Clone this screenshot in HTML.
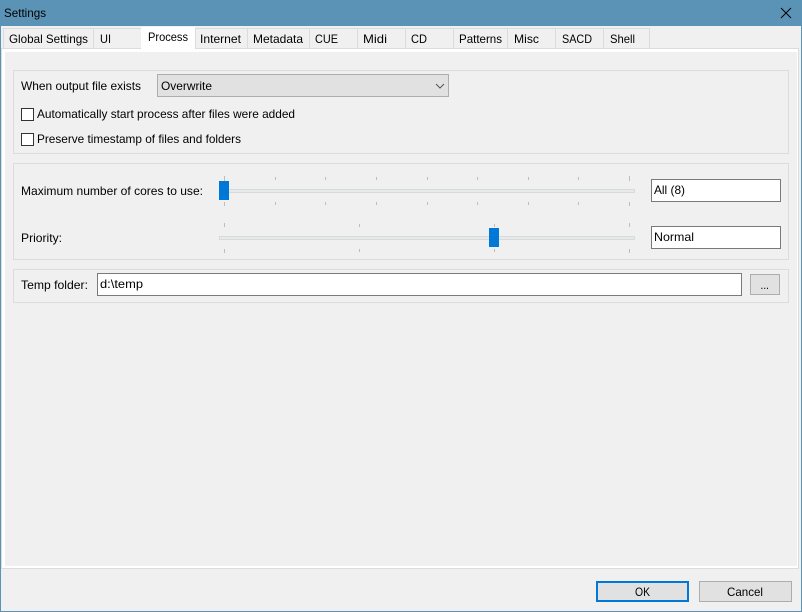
<!DOCTYPE html>
<html>
<head>
<meta charset="utf-8">
<title>Settings</title>
<style>
html,body{margin:0;padding:0;background:#f0f0f0;width:802px;height:612px;overflow:hidden}
svg{display:block}
text{font-family:"Liberation Sans",sans-serif;font-size:12px;fill:#000}
.r{shape-rendering:crispEdges}
</style>
</head>
<body>
<svg width="802" height="612" viewBox="0 0 802 612" xmlns="http://www.w3.org/2000/svg">
<g class="r">
<rect width="802" height="612" fill="#5a93b5"/>
<rect x="1" y="26" width="800" height="585" fill="#f0f0f0"/>
<!-- tabs -->
<g fill="#f0f0f0" stroke="#dcdcdc">
<rect x="3.5" y="28.5" width="90" height="20"/>
<rect x="93.5" y="28.5" width="48" height="20"/>
<rect x="195.5" y="28.5" width="52" height="20"/>
<rect x="247.5" y="28.5" width="62" height="20"/>
<rect x="309.500" y="28.5" width="48" height="20"/>
<rect x="357.5" y="28.5" width="48" height="20"/>
<rect x="405.5" y="28.5" width="48" height="20"/>
<rect x="453.5" y="28.5" width="54" height="20"/>
<rect x="507.5" y="28.5" width="48" height="20"/>
<rect x="555.5" y="28.5" width="48" height="20"/>
<rect x="603.5" y="28.5" width="46" height="20"/>
</g>
<!-- pane -->
<rect x="1" y="48" width="798" height="521" fill="#dcdcdc"/>
<rect x="2" y="49" width="796" height="519" fill="#fff"/>
<rect x="5" y="52" width="792" height="514" fill="#f0f0f0"/>
<!-- selected tab -->
<rect x="141" y="27" width="54" height="25" fill="#fff"/>
<!-- groups -->
<g fill="none" stroke="#dcdcdc">
<rect x="13.5" y="70.5" width="775" height="83"/>
<rect x="13.5" y="163.5" width="775" height="96"/>
<rect x="13.5" y="269.5" width="775" height="33"/>
</g>
<!-- combo -->
<rect x="157.5" y="74.5" width="291" height="22" fill="#e1e1e1" stroke="#adadad"/>
<!-- checkboxes -->
<rect x="21.5" y="108.5" width="12" height="12" fill="#fff" stroke="#333"/>
<rect x="21.5" y="133.5" width="12" height="12" fill="#fff" stroke="#333"/>
<!-- slider tracks -->
<rect x="219" y="189" width="416" height="4" fill="#d6dada"/>
<rect x="220" y="190" width="414" height="2" fill="#e7eaea"/>
<rect x="219" y="236" width="416" height="4" fill="#d6dada"/>
<rect x="220" y="237" width="414" height="2" fill="#e7eaea"/>
<!-- ticks -->
<g fill="#bdbdbd">
<rect x="224" y="176" width="1" height="5"/><rect x="224" y="202" width="1" height="4"/>
<rect x="275" y="177" width="1" height="3"/><rect x="275" y="202" width="1" height="3"/>
<rect x="325" y="177" width="1" height="3"/><rect x="325" y="202" width="1" height="3"/>
<rect x="376" y="177" width="1" height="3"/><rect x="376" y="202" width="1" height="3"/>
<rect x="427" y="177" width="1" height="3"/><rect x="427" y="202" width="1" height="3"/>
<rect x="477" y="177" width="1" height="3"/><rect x="477" y="202" width="1" height="3"/>
<rect x="528" y="177" width="1" height="3"/><rect x="528" y="202" width="1" height="3"/>
<rect x="578" y="177" width="1" height="3"/><rect x="578" y="202" width="1" height="3"/>
<rect x="629" y="176" width="1" height="5"/><rect x="629" y="202" width="1" height="4"/>
<rect x="224" y="223" width="1" height="4"/><rect x="224" y="249" width="1" height="4"/>
<rect x="359" y="224" width="1" height="3"/><rect x="359" y="249" width="1" height="3"/>
<rect x="494" y="224" width="1" height="3"/><rect x="494" y="249" width="1" height="3"/>
<rect x="629" y="223" width="1" height="4"/><rect x="629" y="249" width="1" height="4"/>
</g>
<!-- thumbs -->
<rect x="219" y="181" width="10" height="19" fill="#0078d7"/>
<rect x="489" y="228" width="10" height="19" fill="#0078d7"/>
<!-- inputs -->
<rect x="651.5" y="179.5" width="129" height="22" fill="#fff" stroke="#7a7a7a"/>
<rect x="651.5" y="226.5" width="129" height="22" fill="#fff" stroke="#7a7a7a"/>
<rect x="97.5" y="273.5" width="644" height="22" fill="#fff" stroke="#7a7a7a"/>
<rect x="750.5" y="274.5" width="29" height="20" fill="#e1e1e1" stroke="#adadad"/>
<!-- buttons -->
<rect x="597" y="582" width="91" height="19" fill="#e1e1e1" stroke="#0078d7" stroke-width="2"/>
<rect x="699.5" y="581.5" width="92" height="20" fill="#e1e1e1" stroke="#adadad"/>
</g>
<!-- combo chevron -->
<path d="M436 84l4 4 4-4" fill="none" stroke="#555" stroke-width="1"/>
<!-- close X -->
<path d="M781 8l10 10M791 8l-10 10" fill="none" stroke="#000" stroke-width="1"/>
<!-- text -->
<text x="4" y="17" textLength="42" lengthAdjust="spacingAndGlyphs">Settings</text>
<text x="9" y="43" textLength="79" lengthAdjust="spacingAndGlyphs">Global Settings</text>
<text x="100" y="43" textLength="11" lengthAdjust="spacingAndGlyphs">UI</text>
<text x="148" y="41" textLength="40" lengthAdjust="spacingAndGlyphs">Process</text>
<text x="200" y="43" textLength="41" lengthAdjust="spacingAndGlyphs">Internet</text>
<text x="253" y="43" textLength="50" lengthAdjust="spacingAndGlyphs">Metadata</text>
<text x="315" y="43" textLength="23" lengthAdjust="spacingAndGlyphs">CUE</text>
<text x="363" y="43" textLength="24" lengthAdjust="spacingAndGlyphs">Midi</text>
<text x="411" y="43" textLength="16" lengthAdjust="spacingAndGlyphs">CD</text>
<text x="459" y="43" textLength="43" lengthAdjust="spacingAndGlyphs">Patterns</text>
<text x="514" y="43" textLength="25" lengthAdjust="spacingAndGlyphs">Misc</text>
<text x="562" y="43" textLength="30" lengthAdjust="spacingAndGlyphs">SACD</text>
<text x="610" y="43" textLength="25" lengthAdjust="spacingAndGlyphs">Shell</text>
<text x="21" y="90" textLength="120" lengthAdjust="spacingAndGlyphs">When output file exists</text>
<text x="161" y="90" textLength="51" lengthAdjust="spacingAndGlyphs">Overwrite</text>
<text x="37" y="118" textLength="258" lengthAdjust="spacingAndGlyphs">Automatically start process after files were added</text>
<text x="37" y="143" textLength="204" lengthAdjust="spacingAndGlyphs">Preserve timestamp of files and folders</text>
<text x="21" y="195" textLength="182" lengthAdjust="spacingAndGlyphs">Maximum number of cores to use:</text>
<text x="21" y="242" textLength="41" lengthAdjust="spacingAndGlyphs">Priority:</text>
<text x="21" y="289" textLength="67" lengthAdjust="spacingAndGlyphs">Temp folder:</text>
<text x="100" y="288" textLength="43" lengthAdjust="spacingAndGlyphs">d:\temp</text>
<text x="654" y="194" textLength="31" lengthAdjust="spacingAndGlyphs">All (8)</text>
<text x="654" y="241" textLength="40" lengthAdjust="spacingAndGlyphs">Normal</text>
<text x="760.500" y="289" textLength="8.500" lengthAdjust="spacingAndGlyphs">...</text>
<text x="635" y="596" textLength="15" lengthAdjust="spacingAndGlyphs">OK</text>
<text x="727" y="596" textLength="36" lengthAdjust="spacingAndGlyphs">Cancel</text>
</svg>
</body>
</html>
